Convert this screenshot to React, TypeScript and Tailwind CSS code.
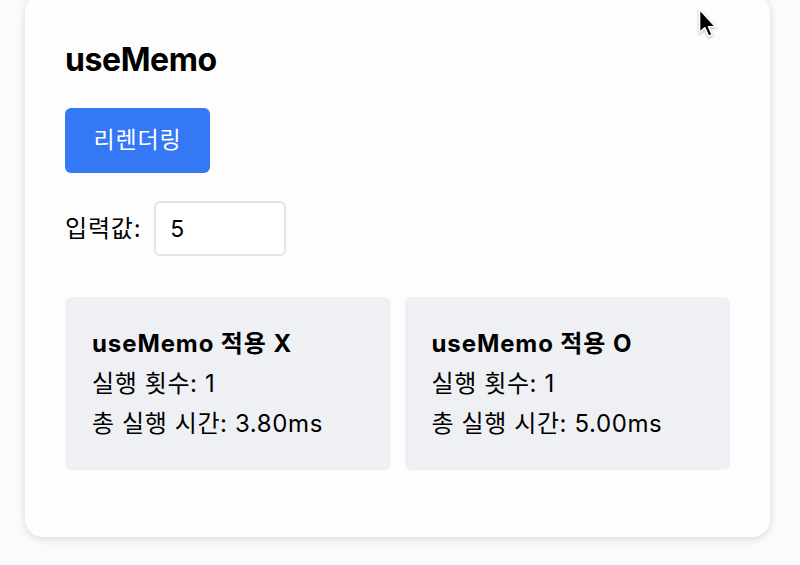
import { useState } from "react";

type Result = {
  title: string;
  count: number;
  time: string;
};

const RESULTS: Result[] = [
  { title: "useMemo 적용 X", count: 1, time: "3.80ms" },
  { title: "useMemo 적용 O", count: 1, time: "5.00ms" },
];

function Cursor() {
  return (
    <svg
      viewBox="0 0 20 30"
      className="absolute left-[697px] top-[7px] w-[22px] h-[32px] drop-shadow-[0_1px_1px_rgba(0,0,0,0.3)]"
    >
      <path
        d="M2 2 L2 24 L7 19.5 L10.5 27.5 L14 26 L10.5 18.5 L17 18.5 Z"
        fill="#000"
        stroke="#fff"
        strokeWidth="1.6"
        strokeLinejoin="round"
      />
    </svg>
  );
}

export default function App() {
  const [value, setValue] = useState("5");

  return (
    <div className="relative w-[800px] h-[565px] overflow-hidden bg-[#fbfbfb] font-['Inter','Noto_Sans_CJK_KR',sans-serif] text-black">
      <div className="ml-[25px] mr-[30px] -mt-[6px] rounded-[18px] bg-[#fdfdfd] shadow-[0_2px_8px_rgba(0,0,0,0.14)] px-[40px] pt-[46px] pb-[67px]">
        <h1 className="text-[32px] leading-[40px] font-bold tracking-[-0.4px]">useMemo</h1>

        <button className="mt-[28px] h-[65px] w-[145px] rounded-[6px] bg-[#3478f6] text-white text-[23px] tracking-[0.8px]">
          리렌더링
        </button>

        <div className="mt-[28px] flex items-center gap-[13px]">
          <label className="text-[24px] tracking-[0.8px]">입력값:</label>
          <input
            value={value}
            onChange={(e) => setValue(e.target.value)}
            className="h-[55px] w-[132px] rounded-[6px] border-2 border-[#e3e4e8] bg-white px-[14px] text-[23px] outline-none"
          />
        </div>

        <div className="mt-[41px] grid grid-cols-2 gap-[14px]">
          {RESULTS.map((r) => (
            <div
              key={r.title}
              className="rounded-[6px] bg-[#eff0f4] px-[27px] pt-[27px] pb-[26px] text-[24px] leading-[40px] tracking-[0.6px]"
            >
              <div className="font-bold tracking-[0.9px]">{r.title}</div>
              <div>실행 횟수: {r.count}</div>
              <div>총 실행 시간: {r.time}</div>
            </div>
          ))}
        </div>
      </div>
      <Cursor />
    </div>
  );
}
